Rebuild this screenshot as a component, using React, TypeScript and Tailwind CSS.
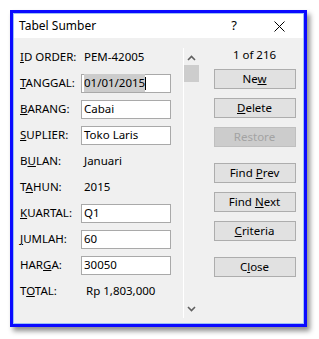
import React from "react";

const font = { fontFamily: '"Noto Sans", "Segoe UI", sans-serif' };

function U({ children }: { children: React.ReactNode }) {
  return <span className="underline underline-offset-[1px] decoration-1">{children}</span>;
}

function Row({ label, children }: { label: React.ReactNode; children: React.ReactNode }) {
  return (
    <div className="flex h-[26px] items-center">
      <div className="w-[61px] shrink-0">{label}</div>
      {children}
    </div>
  );
}

function Field({ value }: { value: string }) {
  return (
    <div className="flex h-[19px] w-[90px] items-center border border-[#a9a9a9] bg-white px-[2px]">{value}</div>
  );
}

function Btn({ children, disabled }: { children: React.ReactNode; disabled?: boolean }) {
  return (
    <div
      className={
        disabled
          ? "flex h-[20px] w-[82px] items-center justify-center border border-[#bfbfbf] bg-[#cccccc] text-[#a3a3a3]"
          : "flex h-[20px] w-[82px] items-center justify-center border border-[#adadad] bg-[#e1e1e1] text-black"
      }
    >
      <span>{children}</span>
    </div>
  );
}

export default function App() {
  return (
    <div className="h-[339px] w-[319px] bg-white pl-[10px] pt-[10px] text-[11.5px] text-black" style={font}>
      <div className="flex h-[317px] w-[297px] flex-col border-[3px] border-[#0a0aff] shadow-[3px_4px_5px_rgba(0,0,0,0.45)]">
        <div className="flex flex-1 flex-col border border-[#9cc0f5]">
          {/* title bar */}
          <div className="flex h-[24px] shrink-0 items-center bg-white pl-[5px] text-[12px]">
            <span className="flex-1">Tabel Sumber</span>
            <span className="mr-[37px] text-[13px]">?</span>
            <svg width="11" height="11" viewBox="0 0 11 11" className="mr-[18px]">
              <path d="M0.5 0.5 L10.5 10.5 M10.5 0.5 L0.5 10.5" stroke="#000" strokeWidth="1" />
            </svg>
          </div>

          {/* body */}
          <div className="flex flex-1 bg-[#f0f0f0]">
            <div className="w-[169px] pl-[6px] pt-[6px]">
              <Row label={<><U>I</U>D ORDER:</>}>
                <span className="pl-[3px]">PEM-42005</span>
              </Row>
              <Row label={<><U>T</U>ANGGAL:</>}>
                <div className="flex h-[19px] w-[90px] items-center border border-[#a9a9a9] bg-white px-[2px]">
                  <span className="bg-[#cccccc]">01/01/2015</span>
                  <span className="h-[13px] w-px bg-black" />
                </div>
              </Row>
              <Row label={<><U>B</U>ARANG:</>}>
                <Field value="Cabai" />
              </Row>
              <Row label={<><U>S</U>UPLIER:</>}>
                <Field value="Toko Laris" />
              </Row>
              <Row label={<>B<U>U</U>LAN:</>}>
                <span className="pl-[3px]">Januari</span>
              </Row>
              <Row label={<>T<U>A</U>HUN:</>}>
                <span className="pl-[3px]">2015</span>
              </Row>
              <Row label={<><U>K</U>UARTAL:</>}>
                <Field value="Q1" />
              </Row>
              <Row label={<><U>J</U>UMLAH:</>}>
                <Field value="60" />
              </Row>
              <Row label={<>HAR<U>G</U>A:</>}>
                <Field value="30050" />
              </Row>
              <Row label={<>T<U>O</U>TAL:</>}>
                <span className="pl-[5px]">Rp 1,803,000</span>
              </Row>
            </div>

            {/* scrollbar */}
            <div className="mb-[5px] mt-[10px] flex w-[16px] flex-col items-center border-l border-white">
              <svg width="9" height="6" viewBox="0 0 9 6" className="mt-[7px]">
                <path d="M1 5 L4.5 1.5 L8 5" stroke="#606060" strokeWidth="1.6" fill="none" />
              </svg>
              <div className="mt-[4px] h-[17px] w-[15px] bg-[#cdcdcd]" />
              <div className="flex-1" />
              <svg width="9" height="6" viewBox="0 0 9 6" className="mb-[6px]">
                <path d="M1 1 L4.5 4.5 L8 1" stroke="#606060" strokeWidth="1.6" fill="none" />
              </svg>
            </div>

            {/* buttons */}
            <div className="flex flex-1 flex-col items-center pl-[14px] pr-[7px] pt-[7px]">
              <div className="flex h-[20px] w-[82px] items-center justify-center">1 of 216</div>
              <div className="mt-[4px] flex flex-col gap-[9px]">
                <Btn>Ne<U>w</U></Btn>
                <Btn><U>D</U>elete</Btn>
                <Btn disabled>Restore</Btn>
              </div>
              <div className="mt-[16px] flex flex-col gap-[9px]">
                <Btn>Find <U>P</U>rev</Btn>
                <Btn>Find <U>N</U>ext</Btn>
                <Btn><U>C</U>riteria</Btn>
              </div>
              <div className="mt-[16px]">
                <Btn>C<U>l</U>ose</Btn>
              </div>
            </div>
          </div>
        </div>
      </div>
    </div>
  );
}
